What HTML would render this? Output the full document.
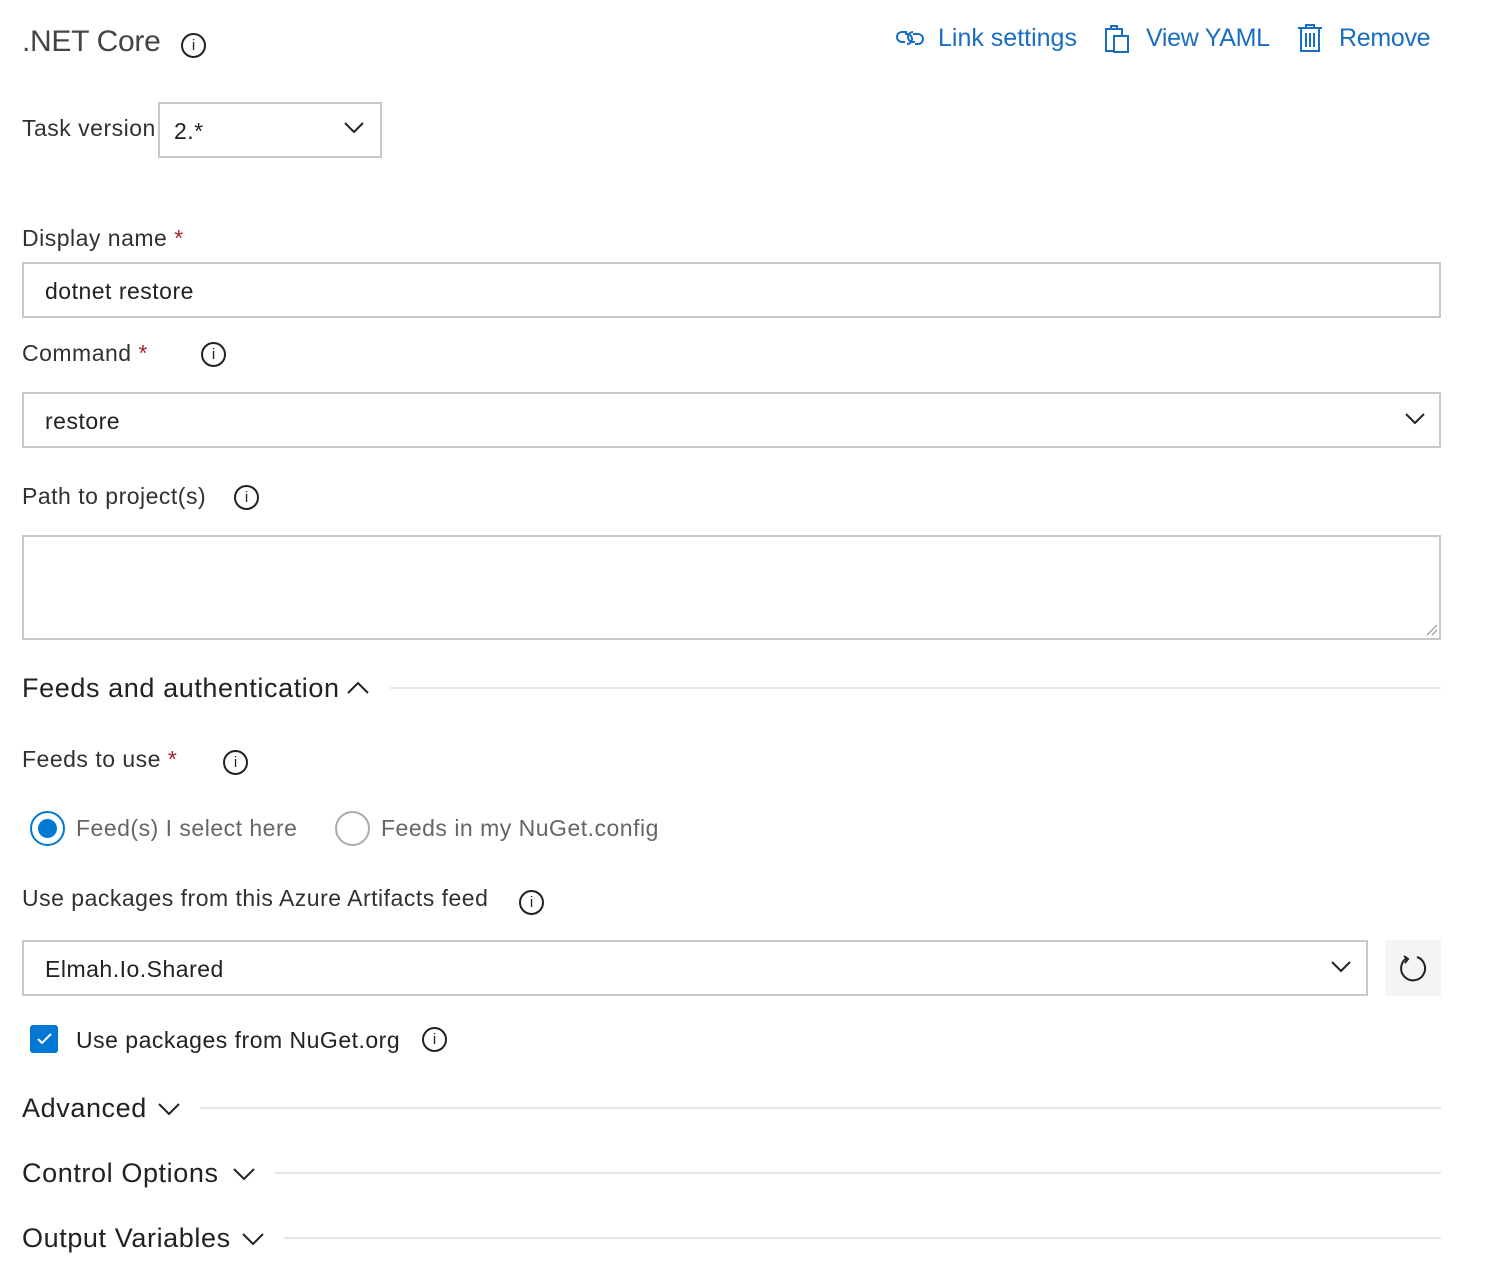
<!DOCTYPE html>
<html><head><meta charset="utf-8"><style>
body{margin:0;width:1506px;height:1288px;background:#fff;font-family:"Liberation Sans",sans-serif;color:#323130;position:relative;overflow:hidden}
.a{position:absolute;white-space:nowrap;font-size:23px;letter-spacing:0.5px}
.box{position:absolute;border:2px solid #c8c8c8;box-sizing:border-box;background:#fff}
.info{position:absolute;width:25px;height:25px;border:2px solid #222;border-radius:50%;box-sizing:border-box;font:15px "Liberation Sans",sans-serif;text-align:center;line-height:21px;color:#222}
.req{color:#a4262c}
.line{position:absolute;height:2px;background:#e6e6e6}
.lnk{color:#1a6ec2}
.h{font-size:27px;color:#222;letter-spacing:0.6px}
</style></head><body>
<div class="a" style="left:22px;top:25px;font-size:30px;color:#444;letter-spacing:-0.3px">.NET Core</div>
<div class="info" style="left:181px;top:33px">i</div>

<svg style="position:absolute;left:895px;top:26px" width="30" height="24" viewBox="0 0 30 24" fill="none" stroke="#1a6ec2" stroke-width="2"><path d="M12 6H7a5 5 0 0 0 0 10h3"/><path d="M10 8h2a5 5 0 0 1 0 10"/><path d="M18 8h5a5 5 0 0 1 0 10h-3"/><path d="M20 16h-2a5 5 0 0 1 0-10"/></svg>
<div class="a lnk" style="left:938px;top:24px;font-size:25px;letter-spacing:0">Link settings</div>
<svg style="position:absolute;left:1104px;top:24px" width="28" height="30" viewBox="0 0 28 30" fill="none" stroke="#1a6ec2" stroke-width="2"><rect x="2" y="5" width="16" height="22"/><rect x="10" y="12" width="14" height="16" fill="#fff"/><path d="M7 5V2h6v3"/></svg>
<div class="a lnk" style="left:1146px;top:24px;font-size:25px;letter-spacing:-0.3px">View YAML</div>
<svg style="position:absolute;left:1297px;top:23px" width="26" height="30" viewBox="0 0 26 30" fill="none" stroke="#1a6ec2" stroke-width="2"><path d="M1 5h24M9 5V2h8v3"/><rect x="4" y="5" width="18" height="23"/><path d="M9 10v14M13 10v14M17 10v14"/></svg>
<div class="a lnk" style="left:1339px;top:24px;font-size:25px;letter-spacing:-0.3px">Remove</div>

<div class="a" style="left:22px;top:115px">Task version</div>
<div class="box" style="left:158px;top:102px;width:224px;height:56px"></div>
<div class="a" style="left:174px;top:118px;color:#222">2.*</div>
<svg style="position:absolute;left:343px;top:121px" width="22" height="14" fill="none" stroke="#222" stroke-width="2"><path d="M2 2l9 9 9-9"/></svg>

<div class="a" style="left:22px;top:225px">Display name <span class="req">*</span></div>
<div class="box" style="left:22px;top:262px;width:1419px;height:56px"></div>
<div class="a" style="left:45px;top:278px;color:#222">dotnet restore</div>

<div class="a" style="left:22px;top:340px">Command <span class="req">*</span></div>
<div class="info" style="left:201px;top:342px">i</div>
<div class="box" style="left:22px;top:392px;width:1419px;height:56px"></div>
<div class="a" style="left:45px;top:408px;color:#222">restore</div>
<svg style="position:absolute;left:1404px;top:412px" width="22" height="14" fill="none" stroke="#222" stroke-width="2"><path d="M2 2l9 9 9-9"/></svg>

<div class="a" style="left:22px;top:483px">Path to project(s)</div>
<div class="info" style="left:234px;top:485px">i</div>
<div class="box" style="left:22px;top:535px;width:1419px;height:105px"></div>
<svg style="position:absolute;left:1424px;top:622px" width="14" height="14" stroke="#888" stroke-width="1"><path d="M13 3L3 13M13 8L8 13"/></svg>

<div class="a h" style="left:22px;top:673px">Feeds and authentication</div>
<svg style="position:absolute;left:346px;top:681px" width="24" height="14" fill="none" stroke="#222" stroke-width="2"><path d="M2 12l10-10 10 10"/></svg>
<div class="line" style="left:390px;top:687px;width:1051px"></div>

<div class="a" style="left:22px;top:746px">Feeds to use <span class="req">*</span></div>
<div class="info" style="left:223px;top:750px">i</div>

<div style="position:absolute;left:30px;top:811px;width:35px;height:35px;border:2px solid #0078d4;border-radius:50%;box-sizing:border-box"></div>
<div style="position:absolute;left:38px;top:819px;width:19px;height:19px;background:#0078d4;border-radius:50%"></div>
<div class="a" style="left:76px;top:815px;color:#666">Feed(s) I select here</div>
<div style="position:absolute;left:335px;top:811px;width:35px;height:35px;border:2px solid #aaa;border-radius:50%;box-sizing:border-box"></div>
<div class="a" style="left:381px;top:815px;color:#666">Feeds in my NuGet.config</div>

<div class="a" style="left:22px;top:885px">Use packages from this Azure Artifacts feed</div>
<div class="info" style="left:519px;top:890px">i</div>
<div class="box" style="left:22px;top:940px;width:1346px;height:56px"></div>
<div class="a" style="left:45px;top:956px;color:#222">Elmah.Io.Shared</div>
<svg style="position:absolute;left:1330px;top:960px" width="22" height="14" fill="none" stroke="#222" stroke-width="2"><path d="M2 2l9 9 9-9"/></svg>
<div style="position:absolute;left:1385px;top:940px;width:56px;height:56px;background:#f4f4f4"></div>
<svg style="position:absolute;left:1398px;top:953px" width="30" height="30" fill="none" stroke="#222" stroke-width="2"><path d="M9 5A12 12 0 1 0 19 4"/><path d="M6 3l4 3-3 4"/></svg>

<div style="position:absolute;left:30px;top:1025px;width:28px;height:28px;background:#0078d4;border-radius:3px"></div>
<svg style="position:absolute;left:30px;top:1025px" width="28" height="28" fill="none" stroke="#fff" stroke-width="2"><path d="M8 14l4 4 9-9"/></svg>
<div class="a" style="left:76px;top:1027px;color:#222">Use packages from NuGet.org</div>
<div class="info" style="left:422px;top:1027px">i</div>

<div class="a h" style="left:22px;top:1093px">Advanced</div>
<svg style="position:absolute;left:157px;top:1102px" width="24" height="14" fill="none" stroke="#222" stroke-width="2"><path d="M2 2l10 10 10-10"/></svg>
<div class="line" style="left:200px;top:1107px;width:1241px"></div>
<div class="a h" style="left:22px;top:1158px">Control Options</div>
<svg style="position:absolute;left:232px;top:1167px" width="24" height="14" fill="none" stroke="#222" stroke-width="2"><path d="M2 2l10 10 10-10"/></svg>
<div class="line" style="left:275px;top:1172px;width:1166px"></div>
<div class="a h" style="left:22px;top:1223px">Output Variables</div>
<svg style="position:absolute;left:241px;top:1232px" width="24" height="14" fill="none" stroke="#222" stroke-width="2"><path d="M2 2l10 10 10-10"/></svg>
<div class="line" style="left:284px;top:1237px;width:1157px"></div>
</body></html>
